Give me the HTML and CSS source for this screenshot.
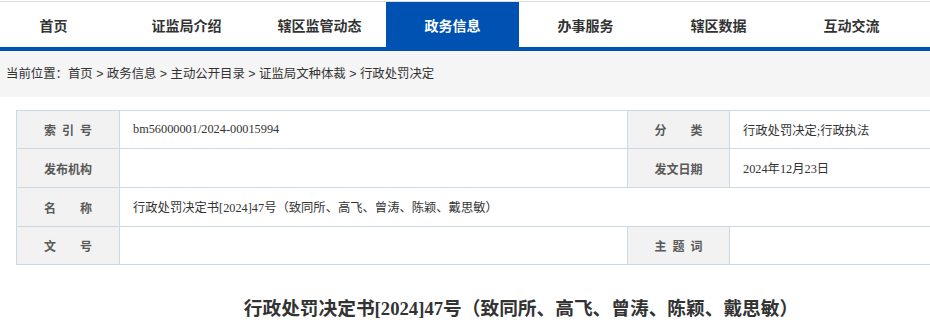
FILE: index.html
```html
<!DOCTYPE html>
<html lang="zh-CN">
<head>
<meta charset="utf-8">
<title>行政处罚决定书[2024]47号</title>
<link rel="stylesheet" href="styles.css">
</head>
<body>
<header class="header">
  <nav class="nav">
    <a class="nav-item">首页</a>
    <a class="nav-item">证监局介绍</a>
    <a class="nav-item">辖区监管动态</a>
    <a class="nav-item active">政务信息</a>
    <a class="nav-item">办事服务</a>
    <a class="nav-item">辖区数据</a>
    <a class="nav-item">互动交流</a>
  </nav>
</header>
<div class="crumbs">当前位置：<a>首页</a> &gt; <a>政务信息</a> &gt; <a>主动公开目录</a> &gt; <a>证监局文种体裁</a> &gt; <a>行政处罚决定</a></div>
<main class="content">
  <div class="meta">
    <div class="cell label">索&ensp;引&ensp;号</div>
    <div class="cell value">bm56000001/2024-00015994</div>
    <div class="cell label">分　　类</div>
    <div class="cell value">行政处罚决定;行政执法</div>

    <div class="cell label">发布机构</div>
    <div class="cell value"></div>
    <div class="cell label">发文日期</div>
    <div class="cell value">2024年12月23日</div>

    <div class="cell label">名　　称</div>
    <div class="cell value wide">行政处罚决定书[2024]47号（致同所、高飞、曾涛、陈颖、戴思敏）</div>

    <div class="cell label">文　　号</div>
    <div class="cell value"></div>
    <div class="cell label">主&ensp;题&ensp;词</div>
    <div class="cell value"></div>
  </div>
  <h1 class="title">行政处罚决定书[2024]47号（致同所、高飞、曾涛、陈颖、戴思敏）</h1>
</main>
</body>
</html>
```
FILE: styles.css
```css
html, body {
  margin: 0;
  padding: 0;
  overflow: hidden;
  background: #fff;
}
body {
  font-family: "Liberation Sans", "Noto Sans CJK SC", sans-serif;
  color: #333;
}
a { color: inherit; text-decoration: none; }

.header {
  padding-top: 1px;
  background: #fff;
}
.nav {
  display: flex;
  border-top: 1px solid #dddddd;
  border-bottom: 4px solid #0052b2;
  height: 45px;
  margin-left: -13px;
  width: 943px;
}
.nav-item {
  width: 133px;
  flex: none;
  display: flex;
  align-items: center;
  justify-content: center;
  font-family: "Noto Sans CJK SC", sans-serif;
  font-weight: bold;
  font-size: 14px;
  color: #333;
}
.nav-item.active {
  background: #0052b2;
  color: #fff;
}

.crumbs {
  height: 46px;
  line-height: 47px;
  background: #f5f5f5;
  padding-left: 6px;
  font-size: 12.4px;
  color: #333;
}

.content {
  margin-left: 16px;
  width: 1010px;
  padding-top: 13px;
}
.meta {
  display: grid;
  grid-template-columns: 103px 508px 102px 297px;
  grid-template-rows: 38px 39px 39px 38px;
  border-top: 1px solid #cbd8e5;
  border-left: 1px solid #cbd8e5;
}
.cell {
  box-sizing: border-box;
  border-right: 1px solid #cbd8e5;
  border-bottom: 1px solid #cbd8e5;
  display: flex;
  align-items: center;
  font-size: 12px;
}
.label {
  background: #f2f2f2;
  justify-content: center;
  font-family: "Noto Sans CJK SC", sans-serif;
  font-weight: bold;
  color: #595959;
}
.value {
  padding-left: 13px;
  font-family: "Liberation Serif", "Noto Sans CJK SC", serif;
  font-size: 12.3px;
  color: #333;
}
.value.wide {
  grid-column: 2 / 5;
}

.title {
  margin: 32px 0 0;
  text-align: center;
  font-family: "Liberation Serif", "Noto Sans CJK SC", serif;
  font-weight: bold;
  font-size: 18.7px;
  line-height: 24px;
  color: #333;
}
```
